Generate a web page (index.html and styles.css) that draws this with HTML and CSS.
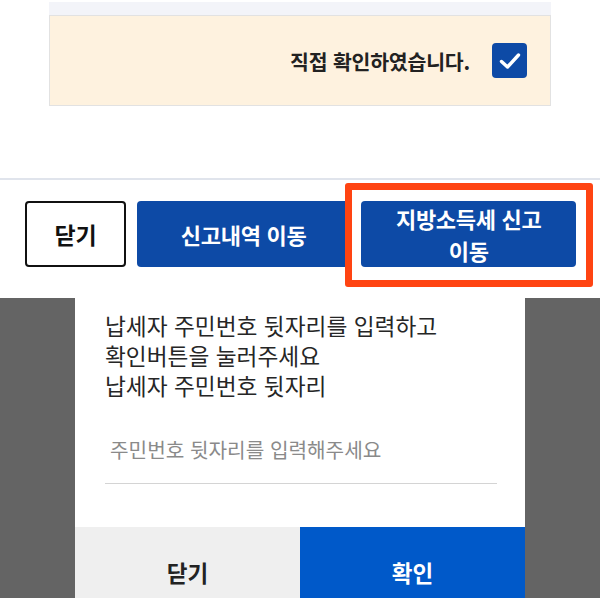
FILE: index.html
```html
<!DOCTYPE html>
<html lang="ko">
<head>
<meta charset="utf-8">
<link rel="stylesheet" href="styles.css">
</head>
<body>
<div class="page">
  <section class="top">
    <div class="strip"></div>
    <div class="confirm-box">
      <span class="confirm-text">직접 확인하였습니다.</span>
      <span class="checkbox">
        <svg width="22" height="18" viewBox="0 0 22 18"><path d="M2.5 9.5 L8.5 15 L19.5 3" fill="none" stroke="#fff" stroke-width="3.4" stroke-linecap="round" stroke-linejoin="round"/></svg>
      </span>
    </div>
  </section>
  <section class="actions">
    <button class="btn btn-outline">닫기</button>
    <button class="btn btn-blue btn-wide">신고내역 이동</button>
    <button class="btn btn-blue btn-local">지방소득세 신고<br>이동</button>
    <div class="highlight"></div>
  </section>
  <section class="overlay">
    <div class="dialog">
      <div class="dialog-body">
        <p class="msg">납세자 주민번호 뒷자리를 입력하고<br>확인버튼을 눌러주세요<br>납세자 주민번호 뒷자리</p>
        <div class="field">주민번호 뒷자리를 입력해주세요</div>
      </div>
      <div class="dialog-buttons">
        <div class="dbtn dbtn-close">닫기</div>
        <div class="dbtn dbtn-ok">확인</div>
      </div>
    </div>
  </section>
</div>
</body>
</html>
```
FILE: styles.css
```css
* { box-sizing: border-box; }
html, body { margin: 0; padding: 0; background: #fff; }
body {
  font-family: "Noto Sans CJK KR", "Noto Sans", sans-serif;
  width: 600px;
  height: 600px;
  overflow: hidden;
}
.page { position: relative; width: 600px; height: 600px; }

.top { padding: 2px 49px 0 49px; height: 180px; border-bottom: 2px solid #e0e4ec; }
.strip { height: 13px; background: #f3f4f9; }
.confirm-box {
  height: 91px;
  background: #fef2df;
  border: 1px solid #e2e2e2;
  display: flex;
  align-items: center;
  justify-content: flex-end;
  padding-right: 23px;
  gap: 22px;
}
.confirm-text { font-size: 20.5px; font-weight: 700; color: #222; letter-spacing: -0.2px; }
.checkbox {
  width: 35px; height: 35px;
  background: #0d4aa6;
  border-radius: 4px;
  display: flex; align-items: center; justify-content: center;
}

.actions {
  position: relative;
  display: flex;
  padding: 21px 24px 0 25px;
  gap: 11px;
  height: 118px;
}
.btn {
  height: 66px;
  border-radius: 4px;
  font-family: inherit;
  font-size: 22px;
  font-weight: 700;
  line-height: 32px;
  padding: 0;
  letter-spacing: -0.3px;
}
.btn-outline { width: 101px; background: #fff; border: 2px solid #111; color: #111; font-size: 23px; }
.btn-blue { background: #0d4aa6; border: none; color: #fff; }
.btn-wide { width: 214px; }
.btn-local { width: 215px; }
.highlight {
  position: absolute;
  left: 345px; top: 3px;
  width: 248px; height: 104px;
  border: 7px solid #ff4412;
  border-radius: 3px;
}

.overlay {
  background: #646464;
  height: 300px;
  padding: 0 75px;
}
.dialog { background: #fff; height: 300px; display: flex; flex-direction: column; overflow: hidden; }
.dialog-body { padding: 13px 28px 0 30px; height: 229px; flex-shrink: 0; }
.msg { margin: 0; font-size: 22.7px; line-height: 30px; color: #262626; }
.field {
  margin-top: 35px;
  padding: 0 0 19px 5px;
  border-bottom: 1px solid #d4d4d4;
  font-size: 20.2px;
  color: #8a8a8a;
  line-height: 28px;
  width: 392px;
}
.dialog-buttons { display: flex; height: 90px; flex-shrink: 0; }
.dbtn {
  flex: 1;
  display: flex; align-items: center; justify-content: center;
  font-size: 22.5px; font-weight: 700;
}
.dbtn-close { background: #efefef; color: #222; }
.dbtn-ok { background: #0059c9; color: #fff; }
```
